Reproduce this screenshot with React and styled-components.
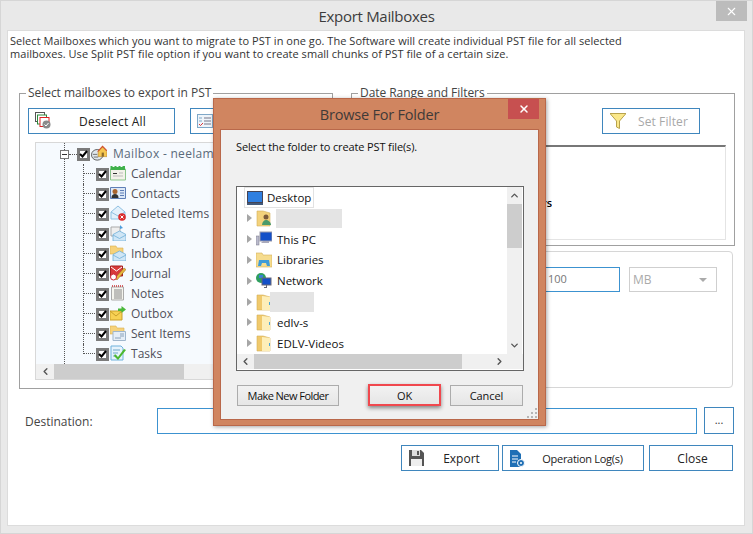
import React from 'react';
import styled, { createGlobalStyle } from 'styled-components';
import { FiX, FiChevronUp, FiChevronDown, FiChevronLeft, FiChevronRight } from 'react-icons/fi';

const GlobalStyle = createGlobalStyle`
  html, body { margin: 0; padding: 0; background: #e9e9e9; }
  * { box-sizing: border-box; }
  body { font-family: "Open Sans", "Noto Sans", sans-serif; color: #333; }
`;

const TallFolder = () => (
  <svg width="16" height="18" viewBox="0 0 16 18">
    <path d="M1 2h6l7 2v13H1z" fill="#f0c96c" stroke="#d4ae58" strokeWidth=".6" />
    <path d="M6 3l8 1v13H6z" fill="#fdeeb8" />
    <path d="M13 9h1v3h-1z" fill="#49a6d8" />
  </svg>
);

const Envelope = ({ x = 3, y = 6 }) => (
  <g transform={`translate(${x} ${y})`}>
    <path d="M0 3.500 6.500 0 13 3.500V10H0z" fill="#cfe6f6" stroke="#6eaed8" strokeWidth=".8" />
    <path d="M0 4l6.500 3.500L13 4" fill="none" stroke="#6eaed8" strokeWidth=".8" />
  </g>
);

const treeIcons = {
  mailbox: (
    <svg width="17" height="17" viewBox="0 0 18 18">
      <ellipse cx="7" cy="10.500" rx="6.500" ry="6" fill="#dfe7ee" stroke="#555" />
      <path d="M8 7l5-5.500L18 7v5.500H8z" fill="#f5c64f" stroke="#b8862a" strokeWidth=".7" />
      <path d="M7.500 7l5.500-6L18 6" fill="none" stroke="#d2502c" strokeWidth="1.200" />
      <path d="M12 8h2.500v4.500H12z" fill="#8a6a2a" />
      <path d="M2 10h5M3 13h5" stroke="#666" />
    </svg>
  ),
  calendar: (
    <svg width="16" height="16" viewBox="0 0 16 16">
      <path d="M.5 4h15v11H.5z" fill="#f2f2ea" stroke="#8cc58c" />
      <path d="M.5 1h2v1h2V1h2v1h2V1h2v1h2V1h2.500v4H.5z" fill="#3fb14b" />
      <path d="M3 8h4v1H3z" fill="#333" />
      <path d="M3 11h10M9 8h4" stroke="#bbb" />
    </svg>
  ),
  contacts: (
    <svg width="16" height="16" viewBox="0 0 16 16">
      <path d="M.5 2.500h15v11H.5z" fill="#dce8f7" stroke="#5f7fb6" />
      <circle cx="5" cy="6.500" r="2.500" fill="#a8642e" />
      <path d="M1.500 13c0-3 1.500-4 3.500-4s3.500 1 3.500 4z" fill="#333" />
      <path d="M10 5.500h4M10 8h4M10 10.500h4" stroke="#5f7fb6" />
    </svg>
  ),
  deleted: (
    <svg width="16" height="16" viewBox="0 0 16 16">
      <path d="M1 7 8 1l7 6v7H1z" fill="#e2f0fb" stroke="#8fc0e2" />
      <path d="M1 7l7 4 7-4" fill="none" stroke="#8fc0e2" />
      <circle cx="12" cy="12" r="3.800" fill="#dc2c2c" />
      <path d="M10.500 10.500l3 3M13.500 10.500l-3 3" stroke="#fff" />
    </svg>
  ),
  drafts: (
    <svg width="16" height="16" viewBox="0 0 16 16">
      <path d="M1 2h9v9H1z" fill="#eee" stroke="#aaa" />
      <path d="M10 0l3 3-3 1z" fill="#4d9ddc" />
      <Envelope />
    </svg>
  ),
  inbox: (
    <svg width="16" height="16" viewBox="0 0 16 16">
      <path d="M0 1h6l1 2h6v6H0z" fill="#f6d27a" stroke="#d9b050" strokeWidth=".6" />
      <Envelope />
    </svg>
  ),
  journal: (
    <svg width="16" height="16" viewBox="0 0 16 16">
      <path d="M.5 1h12v10H.5z" fill="#d83a3a" stroke="#a52020" />
      <path d="M1 2l5.500 4L12 2" fill="none" stroke="#fff" />
      <path d="M5 13L14 3l2 1.500L7 15z" fill="#e8b53e" stroke="#8c6a1e" strokeWidth=".5" />
      <circle cx="3.500" cy="12" r="3" fill="#fff" stroke="#c23" />
    </svg>
  ),
  notes: (
    <svg width="16" height="16" viewBox="0 0 16 16">
      <path d="M1.500 2h12v13h-12z" fill="#f4f4ee" stroke="#aaa" />
      <path d="M2 1h11" stroke="#c33" strokeDasharray="1 1" strokeWidth="1.500" />
      <path d="M4 5h8M4 7h8M4 9h8M4 11h8M4 13h8" stroke="#888" />
    </svg>
  ),
  outbox: (
    <svg width="16" height="16" viewBox="0 0 16 16">
      <path d="M0 6h12v9H0z" fill="#f7d154" stroke="#c99f2a" />
      <path d="M0 6l6 5 6-5" fill="none" stroke="#c99f2a" />
      <path d="M8 6V3.500h3.500V1L16 4.500 11.500 8V6z" fill="#49b83a" />
    </svg>
  ),
  sent: (
    <svg width="16" height="16" viewBox="0 0 16 16">
      <path d="M0 1h6l1 2h7v6H0z" fill="#f6d27a" stroke="#d9b050" strokeWidth=".6" />
      <path d="M3 6.500h12.500v9H3z" fill="#e5eef7" stroke="#9fb6cc" />
      <path d="M10 9h4M10 11h4M5 13h6" stroke="#8aa2ba" />
    </svg>
  ),
  tasks: (
    <svg width="16" height="16" viewBox="0 0 16 16">
      <path d="M1 1h10l2 2v12H1z" fill="#e6f3fc" stroke="#6fb2dc" />
      <path d="M3 5h7M3 8h5M3 11h4" stroke="#6fa6c8" />
      <path d="M5 9l3 3 6-8 2 1-8 10-4-4z" fill="#4cb82e" />
    </svg>
  ),
};

const folderItems = [
  ['Calendar', 'calendar'],
  ['Contacts', 'contacts'],
  ['Deleted Items', 'deleted'],
  ['Drafts', 'drafts'],
  ['Inbox', 'inbox'],
  ['Journal', 'journal'],
  ['Notes', 'notes'],
  ['Outbox', 'outbox'],
  ['Sent Items', 'sent'],
  ['Tasks', 'tasks'],
];

function Check() {
  return (
    <CheckBox>
      <svg width="9" height="8" viewBox="0 0 9 8">
        <path d="M1 4l2.500 2.500L8 1" fill="none" stroke="#000" strokeWidth="2" />
      </svg>
    </CheckBox>
  );
}

export default function App() {
  return (
    <Page>
      <GlobalStyle />
      <TitleBar>
        Export Mailboxes
        <WindowClose><FiX /></WindowClose>
      </TitleBar>
      <Panel>
        <Description>
          Select Mailboxes which you want to migrate to PST in one go. The Software will create individual PST file for all selected
          <br />
          mailboxes. Use Split PST file option if you want to create small chunks of PST file of a certain size.
        </Description>
        <Columns>
          <LeftGroup>
            <GroupTitle>Select mailboxes to export in PST</GroupTitle>
            <ButtonRow>
              <ActionButton $width={147}>
                <IconSlot>
                  <svg width="16" height="18" viewBox="0 0 16 18">
                    <rect x=".5" y=".5" width="9" height="9" fill="#fff" stroke="#555" />
                    <rect x="2.500" y="3" width="9" height="9" fill="#fff" stroke="#2d8a3a" />
                    <rect x="5" y="5.500" width="9" height="9" fill="#fff" stroke="#d22" />
                    <circle cx="11.500" cy="12.500" r="4" fill="#8a8a8a" />
                    <path d="M9.500 12.500l1.500 1.500 2.500-3" fill="none" stroke="#fff" />
                  </svg>
                </IconSlot>
                <ButtonLabel>Deselect All</ButtonLabel>
              </ActionButton>
              <ActionButton $width={130}>
                <IconSlot>
                  <svg width="16" height="16" viewBox="0 0 16 16">
                    <rect x=".5" y="1.500" width="15" height="13" fill="#eef4fa" stroke="#7fa8c8" />
                    <path d="M7 5h7M7 8h7M7 11h7" stroke="#778" />
                    <path d="M2 5h3M2 8h3" stroke="#7fa8c8" />
                    <path d="M2 11l1.500 1.500L6 10" fill="none" stroke="#d33" />
                  </svg>
                </IconSlot>
                <ButtonLabel>Select</ButtonLabel>
              </ActionButton>
            </ButtonRow>
            <TreeBox>
              <TreeList>
                <RootRow>
                  <Expander />
                  <RootStub />
                  <Check />
                  <TreeIcon>{treeIcons.mailbox}</TreeIcon>
                  <RootLabel>Mailbox - neelam sharma</RootLabel>
                </RootRow>
                <ChildList>
                  {folderItems.map(([name, icon]) => (
                    <ChildRow key={name}>
                      <Check />
                      <TreeIcon>{treeIcons[icon]}</TreeIcon>
                      <ChildLabel>{name}</ChildLabel>
                    </ChildRow>
                  ))}
                </ChildList>
              </TreeList>
              <HScroll>
                <ScrollArrow><FiChevronLeft strokeWidth={3} /></ScrollArrow>
                <ScrollThumb $width={130} />
              </HScroll>
            </TreeBox>
          </LeftGroup>
          <RightColumn>
            <RightGroup>
              <GroupTitle>Date Range and Filters</GroupTitle>
              <FilterRow>
                <FilterButton>
                  <svg width="16" height="16" viewBox="0 0 16 16">
                    <path d="M0 .5h16L9.500 8v7.500l-3-1.500V8z" fill="#fbe88a" stroke="#b8a24c" />
                  </svg>
                  <span>Set Filter</span>
                </FilterButton>
              </FilterRow>
              <FilterPanel>
                <FilterNote>Apply Date Filters</FilterNote>
              </FilterPanel>
            </RightGroup>
            <SplitBox>
              <SizeInput>100</SizeInput>
              <UnitSelect>
                MB
                <SelectCaret />
              </UnitSelect>
            </SplitBox>
          </RightColumn>
        </Columns>
        <DestinationRow>
          <DestinationLabel>Destination:</DestinationLabel>
          <DestinationInput />
          <DotsButton>...</DotsButton>
        </DestinationRow>
        <FooterRow>
          <FooterButton $width={98}>
            <svg width="15" height="16" viewBox="0 0 15 16">
              <path d="M0 0h12l3 3v13H0z" fill="#555" />
              <path d="M3 0h8v6H3z" fill="#ddd" />
              <path d="M2 9h11v7H2z" fill="#eee" />
              <path d="M8 1h2v4H8z" fill="#555" />
            </svg>
            <FooterLabel $shift={8}>Export</FooterLabel>
          </FooterButton>
          <FooterButton $width={142}>
            <svg width="15" height="17" viewBox="0 0 15 17">
              <path d="M0 0h7l4 4v13H0z" fill="#1f6fb5" />
              <path d="M2 6h6M2 9h6M2 12h4" stroke="#fff" />
              <circle cx="11" cy="13" r="3.500" fill="#1f6fb5" stroke="#fff" />
              <circle cx="11" cy="13" r="1" fill="#fff" />
            </svg>
            <CompactLabel $shift={4}>Operation Log(s)</CompactLabel>
          </FooterButton>
          <FooterButton $width={84}>
            <FooterLabel $shift={3}>Close</FooterLabel>
          </FooterButton>
        </FooterRow>
      </Panel>

      <Dialog>
        <DialogTitle>
          Browse For Folder
          <DialogClose><FiX strokeWidth={3} /></DialogClose>
        </DialogTitle>
        <DialogBody>
          <DialogText>Select the folder to create PST file(s).</DialogText>
          <FolderBox>
            <FolderView>
              <FolderList>
                <DesktopRow>
                  <svg width="16" height="14" viewBox="0 0 16 14">
                    <rect x=".5" y=".5" width="15" height="11" fill="#2f7fe0" stroke="#445" />
                    <path d="M0 12h16v2H0z" fill="#445a7a" />
                  </svg>
                  Desktop
                </DesktopRow>
                <FolderRow>
                  <Arrow />
                  <svg width="16" height="18" viewBox="0 0 16 18">
                    <path d="M1 2h6l7 2v13H1z" fill="#f3d27c" stroke="#d4ae58" strokeWidth=".6" />
                    <circle cx="10" cy="8" r="2.500" fill="#7a5a3a" />
                    <path d="M6 16c0-3 2-5 4-5s5 2 5 5z" fill="#4a9a6a" />
                  </svg>
                  <Redacted $width={66} $height={19} $shift={1} />
                </FolderRow>
                <FolderRow>
                  <Arrow />
                  <svg width="16" height="16" viewBox="0 0 16 16">
                    <rect x="4" y="1" width="12" height="9" fill="#1450c8" stroke="#99a" />
                    <path d="M7 10h6v2H5z" fill="#aab" />
                    <rect x="0" y="5" width="3" height="9" fill="#bbc" stroke="#778" strokeWidth=".5" />
                  </svg>
                  <FolderName>This PC</FolderName>
                </FolderRow>
                <FolderRow>
                  <Arrow />
                  <svg width="16" height="16" viewBox="0 0 16 16">
                    <path d="M0 1h6l1 2h9v12H0z" fill="#f6dc8e" stroke="#d4ae58" strokeWidth=".6" />
                    <path d="M2 14l1-6h10l1 6h-3l-1-3H6l-1 3z" fill="#3f9bd8" />
                  </svg>
                  <FolderName>Libraries</FolderName>
                </FolderRow>
                <FolderRow>
                  <Arrow />
                  <svg width="16" height="16" viewBox="0 0 16 16">
                    <circle cx="5" cy="5" r="5" fill="#2f9f5f" />
                    <path d="M3 2h4v3H3z" fill="#3a7fd8" />
                    <rect x="6" y="5" width="9" height="7" fill="#1450c8" stroke="#667" />
                    <path d="M10 12h1v3H8v-1h2z" fill="#667" />
                  </svg>
                  <FolderName>Network</FolderName>
                </FolderRow>
                <FolderRow>
                  <Arrow />
                  <TallFolder />
                  <Redacted $width={44} $height={20} $shift={-5} />
                </FolderRow>
                <FolderRow>
                  <Arrow />
                  <TallFolder />
                  <FolderName>edlv-s</FolderName>
                </FolderRow>
                <FolderRow>
                  <Arrow />
                  <TallFolder />
                  <FolderName>EDLV-Videos</FolderName>
                </FolderRow>
              </FolderList>
              <VScroll>
                <ScrollArrow $tall><FiChevronUp strokeWidth={3} /></ScrollArrow>
                <VThumb />
                <ScrollArrow $tall><FiChevronDown strokeWidth={3} /></ScrollArrow>
              </VScroll>
            </FolderView>
            <DialogHScroll>
              <ScrollArrow><FiChevronLeft strokeWidth={3} /></ScrollArrow>
              <ScrollThumb $width={208} />
              <ArrowRight><FiChevronRight strokeWidth={3} /></ArrowRight>
            </DialogHScroll>
          </FolderBox>
          <DialogButtons>
            <DialogButton $width={102} $tight>Make New Folder</DialogButton>
            <OkButton>OK</OkButton>
            <DialogButton $width={73}>Cancel</DialogButton>
          </DialogButtons>
          <Grip>
            <svg width="11" height="11" viewBox="0 0 11 11" fill="#b5b5b5">
              <path d="M8 0h2v2H8zM4 4h2v2H4zM8 4h2v2H8zM0 8h2v2H0zM4 8h2v2H4zM8 8h2v2H8z" />
            </svg>
          </Grip>
        </DialogBody>
      </Dialog>
    </Page>
  );
}

const Page = styled.div`
  position: relative;
  width: 753px;
  height: 534px;
  display: flex;
  flex-direction: column;
  background: #e9e9e9;
  border: 1px solid #d6d6d6;
  overflow: hidden;
`;

const TitleBar = styled.div`
  position: relative;
  height: 29px;
  flex: none;
  display: flex;
  align-items: center;
  justify-content: center;
  font-size: 15px;
  letter-spacing: -0.3px;
  color: #3c3c3c;
`;

const WindowClose = styled.div`
  position: absolute;
  top: 0;
  right: 5px;
  width: 31px;
  height: 20px;
  background: #bcbcbc;
  color: #fff;
  display: flex;
  align-items: center;
  justify-content: center;
  font-size: 13px;
`;

const Panel = styled.div`
  width: 738px;
  height: 496px;
  margin-left: 6px;
  background: #fff;
  border: 1px solid #dcdcdc;
  padding: 3px 11px 0;
`;

const Description = styled.p`
  margin: 0 0 0 -9px;
  font-size: 11px;
  line-height: 13px;
  letter-spacing: 0.04px;
  white-space: nowrap;
  color: #333;
`;

const Columns = styled.div`
  display: flex;
  align-items: flex-start;
  gap: 18px;
  margin-top: 26px;
`;

const LeftGroup = styled.fieldset`
  width: 314px;
  height: 303px;
  flex: none;
  margin: 0;
  padding: 8px 8px 0;
  border: 1px solid #a0a0a0;
  min-width: 0;
`;

const RightGroup = styled(LeftGroup)`
  width: 384px;
  height: 160px;
`;

const GroupTitle = styled.legend`
  margin-left: -2px;
  padding: 0 2px;
  font-size: 12px;
  line-height: 14px;
  letter-spacing: -0.05px;
  color: #444;
`;

const RightColumn = styled.div`
  display: flex;
  flex-direction: column;
  flex: none;
  gap: 5px;
`;

const ButtonRow = styled.div`
  display: flex;
  gap: 15px;
`;

const ActionButton = styled.div`
  width: ${(props) => props.$width}px;
  height: 26px;
  flex: none;
  display: flex;
  align-items: center;
  padding-left: 6px;
  border: 1px solid #3f86bd;
  font-size: 12px;
  letter-spacing: 0.2px;
  color: #222;
`;

const IconSlot = styled.span`
  display: flex;
  flex: none;
  width: 16px;
`;

const ButtonLabel = styled.span`
  flex: 1;
  text-align: center;
`;

const TreeBox = styled.div`
  width: 290px;
  height: 238px;
  margin: 8px 0 0 7px;
  border: 1px solid #d8d8d8;
  background: #f6fafe;
  display: flex;
  flex-direction: column;
`;

const TreeList = styled.div`
  position: relative;
  height: 221px;
  flex: none;
  padding-top: 1px;

  &::before {
    content: '';
    position: absolute;
    left: 28px;
    top: 0;
    bottom: 0;
    border-left: 1px dotted #555;
  }
`;

const RootRow = styled.div`
  position: relative;
  height: 20px;
  display: flex;
  align-items: center;
  padding-left: 24px;
`;

const Expander = styled.span`
  position: relative;
  z-index: 1;
  width: 9px;
  height: 9px;
  flex: none;
  border: 1px solid #777;
  background: #fff;

  &::after {
    content: '';
    position: absolute;
    left: 1px;
    right: 1px;
    top: 3px;
    height: 1px;
    background: #333;
  }
`;

const RootStub = styled.span`
  width: 8px;
  flex: none;
  border-top: 1px dotted #555;
`;

const CheckBox = styled.span`
  width: 13px;
  height: 13px;
  flex: none;
  border: 3px solid #7b7b7b;
  background: #fff;
  display: flex;
  align-items: center;
  justify-content: center;

  svg {
    flex: none;
    margin: -1px;
  }
`;

const TreeIcon = styled.span`
  display: flex;
  flex: none;
  width: 16px;
  height: 18px;
  align-items: center;
  margin: -2px 0 0 1px;
`;

const RootLabel = styled.span`
  margin: -2px 0 0 6px;
  font-size: 12px;
  letter-spacing: 0.3px;
  white-space: nowrap;
  color: #5a6a7a;
`;

const ChildLabel = styled(RootLabel)`
  margin-left: 5px;
  letter-spacing: 0.02px;
  color: #50505a;
`;

const ChildList = styled.div`
  margin-left: 47px;
`;

const ChildRow = styled.div`
  position: relative;
  height: 20px;
  display: flex;
  align-items: center;
  padding-left: 13px;

  &::before {
    content: '';
    position: absolute;
    left: 0;
    top: 0;
    bottom: 0;
    border-left: 1px dotted #555;
  }

  &:last-child::before {
    bottom: 10px;
  }

  &::after {
    content: '';
    position: absolute;
    left: 1px;
    width: 11px;
    top: 9px;
    border-top: 1px dotted #555;
  }
`;

const HScroll = styled.div`
  height: 15px;
  flex: none;
  display: flex;
  align-items: stretch;
  background: #f0f0f0;
`;

const ScrollArrow = styled.span`
  width: ${(props) => (props.$tall ? '100%' : '18px')};
  height: ${(props) => (props.$tall ? '17px' : 'auto')};
  flex: none;
  display: flex;
  align-items: center;
  justify-content: center;
  font-size: 11px;
  color: #555;
`;

const ArrowRight = styled(ScrollArrow)`
  margin: 0 15px 0 auto;
`;

const ScrollThumb = styled.span`
  width: ${(props) => props.$width}px;
  flex: none;
  background: #cdcdcd;
`;

const FilterRow = styled.div`
  display: flex;
  justify-content: flex-end;
  padding-right: 26px;
`;

const FilterButton = styled.div`
  width: 98px;
  height: 26px;
  display: flex;
  align-items: center;
  padding-left: 7px;
  gap: 12px;
  border: 1px solid #3f86bd;
  font-size: 12px;
  letter-spacing: 0.1px;
  color: #a8a8a8;
`;

const FilterPanel = styled.div`
  height: 95px;
  margin-top: 11px;
  border: 1px solid #e4e4e4;
  border-top: 2px solid #777;
  padding-top: 49px;
`;

const FilterNote = styled.div`
  width: 191px;
  text-align: right;
  font-size: 11px;
  font-weight: 600;
  line-height: 13px;
  color: #000;
  white-space: nowrap;
  overflow: hidden;
`;

const SplitBox = styled.div`
  width: 382px;
  height: 137px;
  border: 1px solid #d6d6d6;
  border-radius: 4px;
  display: flex;
  justify-content: flex-end;
  align-items: flex-start;
  gap: 9px;
  padding: 15px 15px 0 0;
`;

const SizeInput = styled.div`
  width: 76px;
  height: 25px;
  border: 1px solid #3c92d0;
  padding-left: 3px;
  font-size: 11px;
  line-height: 21px;
  color: #777;
`;

const UnitSelect = styled.div`
  position: relative;
  width: 88px;
  height: 25px;
  border: 1px solid #cfcfcf;
  padding-left: 3px;
  font-size: 12px;
  line-height: 23px;
  color: #aaa;
`;

const SelectCaret = styled.span`
  position: absolute;
  right: 9px;
  top: 10px;
  border-left: 4px solid transparent;
  border-right: 4px solid transparent;
  border-top: 4px solid #aaa;
`;

const DestinationRow = styled.div`
  display: flex;
  align-items: center;
  margin-top: 18px;
  padding-left: 6px;
`;

const DestinationLabel = styled.span`
  width: 132px;
  flex: none;
  padding-top: 2px;
  font-size: 12px;
  color: #444;
`;

const DestinationInput = styled.div`
  width: 540px;
  height: 26px;
  flex: none;
  border: 1px solid #3c92d0;
`;

const DotsButton = styled.div`
  width: 30px;
  height: 27px;
  flex: none;
  margin-left: 7px;
  border: 1px solid #3f86bd;
  text-align: center;
  font-size: 11px;
  line-height: 24px;
  color: #333;
`;

const FooterRow = styled.div`
  display: flex;
  justify-content: flex-end;
  gap: 3px;
  margin-top: 11px;

  & > div:last-child {
    margin-left: 2px;
  }
`;

const FooterButton = styled.div`
  width: ${(props) => props.$width}px;
  height: 26px;
  display: flex;
  align-items: center;
  padding: 0 7px;
  border: 1px solid #3f86bd;
  font-size: 12px;
  color: #222;

  svg {
    flex: none;
  }
`;

const FooterLabel = styled.span`
  flex: 1;
  text-align: center;
  padding-left: ${(props) => props.$shift}px;
`;

const CompactLabel = styled(FooterLabel)`
  font-size: 11px;
  letter-spacing: -0.3px;
`;

const Dialog = styled.div`
  position: absolute;
  left: 212px;
  top: 97px;
  width: 333px;
  height: 328px;
  display: flex;
  flex-direction: column;
  background: #d08560;
  border: 1px solid #b9684a;
  box-shadow: 1px 1px 4px rgba(0, 0, 0, 0.35);
  padding: 0 6px 5px;
`;

const DialogTitle = styled.div`
  position: relative;
  height: 30px;
  flex: none;
  display: flex;
  align-items: center;
  justify-content: center;
  font-size: 14.500px;
  letter-spacing: -0.2px;
  color: #3f3a38;
`;

const DialogClose = styled.div`
  position: absolute;
  top: 0;
  right: 0;
  width: 31px;
  height: 20px;
  background: #c75050;
  color: #fff;
  display: flex;
  align-items: center;
  justify-content: center;
  font-size: 12px;
`;

const DialogBody = styled.div`
  position: relative;
  flex: 1;
  background: #f0f0f0;
  border: 1px solid #b9684a;
  padding: 10px 15px 0;
`;

const DialogText = styled.div`
  font-size: 11px;
  line-height: 14px;
  letter-spacing: -0.13px;
  color: #111;
`;

const FolderBox = styled.div`
  width: 288px;
  height: 185px;
  margin: 32px 0 0 0;
  background: #fff;
  border: 1px solid #666;
  display: flex;
  flex-direction: column;
`;

const FolderView = styled.div`
  flex: 1;
  min-height: 0;
  display: flex;
`;

const FolderList = styled.div`
  flex: 1;
  padding: 0 0 0 7px;
`;

const DesktopRow = styled.div`
  width: 70px;
  height: 21px;
  display: flex;
  align-items: center;
  gap: 4px;
  padding-left: 2px;
  border: 1px solid #e2e2e2;
  font-size: 11.500px;
  color: #111;
`;

const FolderRow = styled.div`
  height: 20.800px;
  display: flex;
  align-items: center;
  gap: 3px;
`;

const Arrow = styled.span`
  width: 0;
  height: 0;
  flex: none;
  margin: 0 1px 0 3px;
  border-left: 5px solid #a6a6a6;
  border-top: 4px solid transparent;
  border-bottom: 4px solid transparent;
`;

const FolderName = styled.span`
  margin-left: 2px;
  font-size: 11.500px;
  color: #111;
`;

const Redacted = styled.span`
  width: ${(props) => props.$width}px;
  height: ${(props) => props.$height}px;
  margin-left: ${(props) => props.$shift}px;
  background: #e4e4e4;
`;

const VScroll = styled.div`
  width: 15px;
  flex: none;
  margin-right: 1px;
  display: flex;
  flex-direction: column;
  background: #f0f0f0;
`;

const VThumb = styled.span`
  height: 44px;
  flex: none;
  background: #cdcdcd;
  margin-bottom: auto;
`;

const DialogHScroll = styled(HScroll)`
  margin-bottom: 1px;

  & > span:first-child {
    width: 17px;
  }
`;

const DialogButtons = styled.div`
  display: flex;
  align-items: center;
  margin: 13px 0 0 1px;
  gap: 9px;
`;

const DialogButton = styled.div`
  width: ${(props) => props.$width}px;
  height: 21px;
  flex: none;
  display: flex;
  align-items: center;
  justify-content: center;
  background: linear-gradient(#f2f2f2, #e6e6e6);
  border: 1px solid #acacac;
  font-size: 11px;
  letter-spacing: ${(props) => (props.$tight ? '-0.55px' : '-0.1px')};
  color: #111;
`;

const OkButton = styled(DialogButton)`
  width: 73px;
  height: 22px;
  margin-left: 20px;
  border: 2px solid #f0484e;
  box-shadow: 0 2px 4px rgba(0, 0, 0, 0.45);
`;

const Grip = styled.span`
  position: absolute;
  right: 0;
  bottom: 0;
  display: flex;
`;
